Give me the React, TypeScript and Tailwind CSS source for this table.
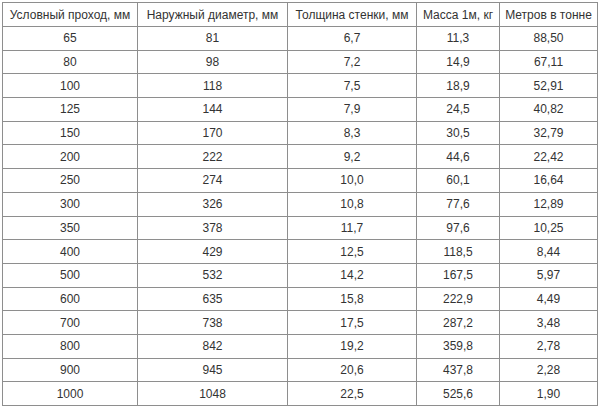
import React from 'react'

const HEAD = ['Условный проход, мм', 'Наружный диаметр, мм', 'Толщина стенки, мм', 'Масса 1м, кг', 'Метров в тонне']

const ROWS: string[][] = [
  ['65', '81', '6,7', '11,3', '88,50'],
  ['80', '98', '7,2', '14,9', '67,11'],
  ['100', '118', '7,5', '18,9', '52,91'],
  ['125', '144', '7,9', '24,5', '40,82'],
  ['150', '170', '8,3', '30,5', '32,79'],
  ['200', '222', '9,2', '44,6', '22,42'],
  ['250', '274', '10,0', '60,1', '16,64'],
  ['300', '326', '10,8', '77,6', '12,89'],
  ['350', '378', '11,7', '97,6', '10,25'],
  ['400', '429', '12,5', '118,5', '8,44'],
  ['500', '532', '14,2', '167,5', '5,97'],
  ['600', '635', '15,8', '222,9', '4,49'],
  ['700', '738', '17,5', '287,2', '3,48'],
  ['800', '842', '19,2', '359,8', '2,78'],
  ['900', '945', '20,6', '437,8', '2,28'],
  ['1000', '1048', '22,5', '525,6', '1,90'],
]

const COLS = ['w-[135px]', 'w-[150px]', 'w-[129px]', 'w-[83px]', 'w-[98px]']

export default function App() {
  return (
    <div className="w-[600px] h-[408px] bg-white pt-[2px] pl-[2px] font-['Liberation_Sans',Arial,sans-serif] text-[12px] text-[#333333]">
      <table className="table-fixed border-collapse w-[596px]">
        <colgroup>
          {COLS.map((c, i) => <col key={i} className={c} />)}
        </colgroup>
        <thead>
          <tr className="h-[24px]">
            {HEAD.map((h) => (
              <th key={h} className="border border-[#8e8e8e] font-normal text-center whitespace-nowrap p-0">
                {h}
              </th>
            ))}
          </tr>
        </thead>
        <tbody>
          {ROWS.map((r) => (
            <tr key={r[0]} className="h-[23.7px]">
              {r.map((v, i) => (
                <td key={i} className="border border-[#8e8e8e] text-center p-0">
                  {v}
                </td>
              ))}
            </tr>
          ))}
        </tbody>
      </table>
    </div>
  )
}
